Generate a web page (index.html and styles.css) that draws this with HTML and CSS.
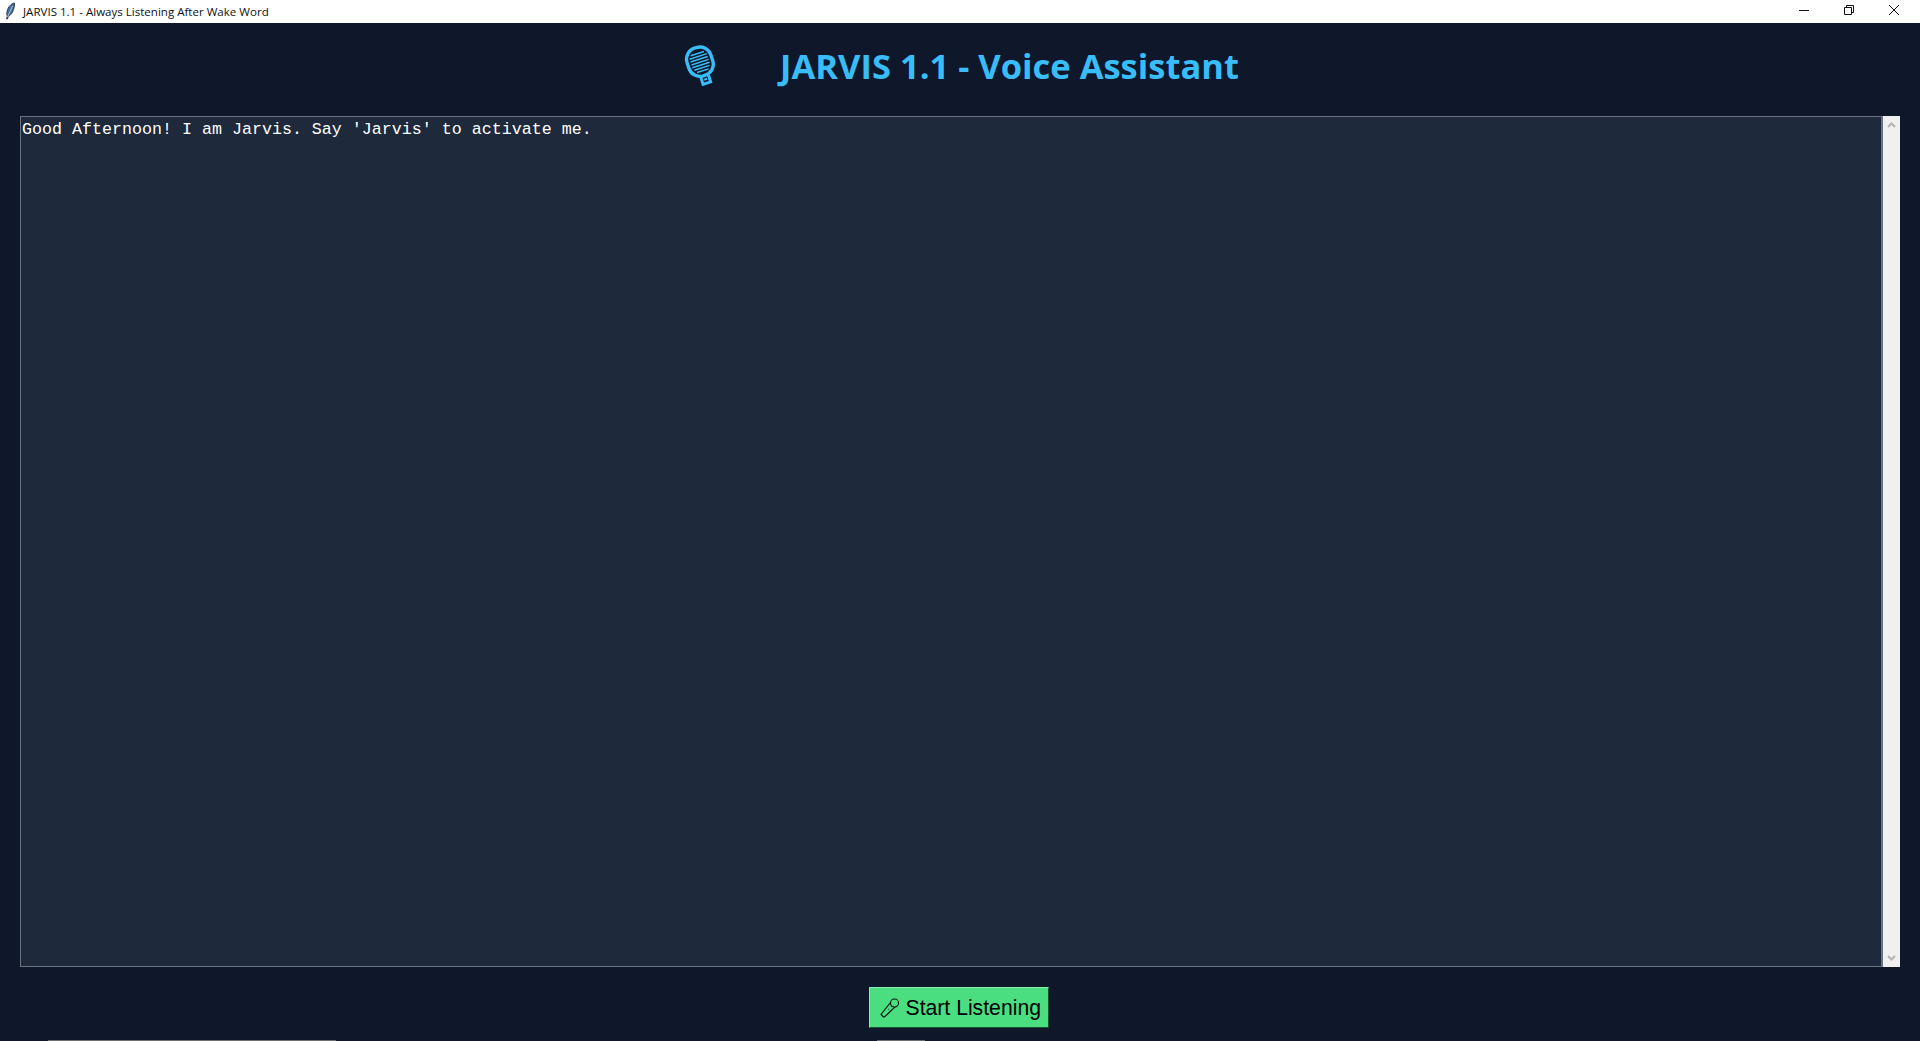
FILE: index.html
```html
<!DOCTYPE html>
<html lang="en">
<head>
<meta charset="utf-8">
<title>JARVIS 1.1 - Always Listening After Wake Word</title>
<link rel="stylesheet" href="styles.css">
</head>
<body>
<div class="window">
  <header class="titlebar">
    <svg class="feather" width="14" height="18" viewBox="0 0 14 18"><path d="M11.500 1C8 1.500 5 5 4 9.500c-.4 2-.3 3.500.3 4.500L3.500 17h1l.8-2.800C8 13.500 10 10 11 6c.4-1.800.7-3.500.5-5z" fill="#3f6f9e" stroke="#1c2b3c" stroke-width=".8"/><path d="M9.500 4L4.500 15" stroke="#dfe8f0" stroke-width=".7"/></svg>
    <span class="titlebar-text">JARVIS 1.1 - Always Listening After Wake Word</span>
    <div class="winbtns">
      <svg class="winbtn" width="10" height="10" viewBox="0 0 10 10"><path d="M0 5.500h10" stroke="#111" fill="none"/></svg>
      <svg class="winbtn" width="10" height="10" viewBox="0 0 10 10"><path d="M.5 2.500h7v7h-7zM2.500 2.500v-2h7v7h-2" stroke="#111" fill="none"/></svg>
      <svg class="winbtn" width="10" height="10" viewBox="0 0 10 10"><path d="M0 0l10 10M10 0L0 10" stroke="#111" fill="none"/></svg>
    </div>
  </header>
  <div class="heading">
    <svg class="mic" width="34" height="42" viewBox="0 0 34 42">
      <g transform="rotate(-18 17 20)" fill="none" stroke="#38bdf8">
        <rect x="4.500" y="2" width="25" height="29" rx="11.500" stroke-width="3.400"/>
        <path d="M10 8h14M8 11h18M8 14h18M8 17h18M8 20h18M9 23h16M11 26h12" stroke-width="1.500" stroke="#38bdf8"/>
        <path d="M13 32v7h8v-7M17 34v2" stroke-width="3"/>
      </g>
    </svg>
    <h1 class="title">JARVIS 1.1 - Voice Assistant</h1>
  </div>
  <main class="console-row">
    <div class="console">Good Afternoon! I am Jarvis. Say 'Jarvis' to activate me.</div>
    <div class="scrollbar">
      <svg width="9" height="6" viewBox="0 0 9 6"><path d="M1 5l3.500-3.500L8 5" fill="none" stroke="#b4b4b4" stroke-width="2"/></svg>
      <svg width="9" height="6" viewBox="0 0 9 6"><path d="M1 1l3.500 3.500L8 1" fill="none" stroke="#b4b4b4" stroke-width="2"/></svg>
    </div>
  </main>
  <div class="actions">
    <button class="start-btn" type="button">
      <svg width="20" height="20" viewBox="0 0 20 20" fill="none" stroke="#111" stroke-width="1.100"><path d="M10.500 4.500L15 9 5 18.500l-1.500.5L1 16.500z"/><circle cx="14.500" cy="5" r="4" fill="#4ade80"/><path d="M11.500 8l-.5.500M9 11l-.5.500"/></svg>
      <span>Start Listening</span>
    </button>
  </div>
  <div class="edges">
    <span class="edge edge-long"></span>
    <span class="edge edge-short"></span>
  </div>
</div>
</body>
</html>
```
FILE: styles.css
```css
* { box-sizing: border-box; }
html, body { margin: 0; height: 100%; overflow: hidden; }
.window {
  width: 1920px;
  height: 1041px;
  background: #0f172a;
  display: flex;
  flex-direction: column;
}
.titlebar {
  height: 23px;
  background: #fff;
  display: flex;
  align-items: center;
  padding-left: 3px;
  flex: none;
}
.feather { margin-right: 6px; margin-top: -2px; }
.titlebar-text {
  font: 11.550px "Open Sans", "Noto Sans", sans-serif;
  color: #111;
}
.winbtns {
  margin-left: auto;
  display: flex;
  align-items: center;
  gap: 35px;
  padding-right: 21px;
  margin-top: -4px;
}
.heading {
  height: 93px;
  flex: none;
  display: flex;
  align-items: center;
  justify-content: center;
  gap: 62px;
  padding-bottom: 8px;
  padding-left: 3px;
}
.title {
  margin: 0;
  font: 700 34.500px "Open Sans", "Noto Sans", sans-serif;
  color: #38bdf8;
  white-space: nowrap;
}
.console-row {
  height: 851px;
  flex: none;
  display: flex;
  margin: 0 20px 0 20px;
}
.console {
  flex: 1;
  background: #1e293b;
  border: 1px solid #6b7280;
  border-right-width: 2px;
  color: #fff;
  font: 16.670px/24px "Liberation Mono", monospace;
  padding: 1px 1px;
}
.scrollbar {
  width: 17px;
  background: #f0f0f0;
  display: flex;
  flex-direction: column;
  justify-content: space-between;
  align-items: center;
  padding: 6px 0;
}
.actions {
  flex: 1;
  padding-top: 20px;
  display: flex;
  justify-content: center;
  align-items: flex-start;
  padding-right: 3px;
}
.start-btn {
  width: 180px;
  height: 41px;
  background: #4ade80;
  border: 1px solid;
  border-color: #86efac #14532d #14532d #86efac;
  display: flex;
  align-items: center;
  gap: 6px;
  padding: 0 0 0 10px;
  font: 21.200px "Liberation Sans", sans-serif;
  color: #000;
}
.edges {
  height: 1px;
  flex: none;
  position: relative;
  margin-top: -1px;
}
.edge { position: absolute; top: 0; height: 1px; background: #6b6f72; }
.edge-long { left: 48px; width: 288px; }
.edge-short { left: 877px; width: 48px; }
```
